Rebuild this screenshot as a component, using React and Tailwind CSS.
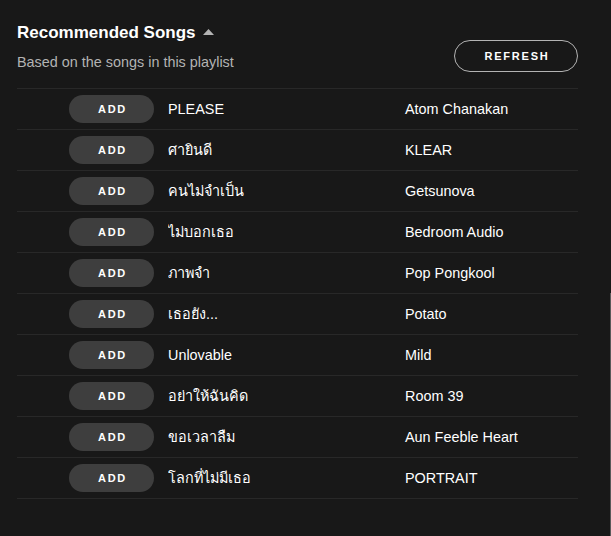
const songs = [
  { title: 'PLEASE', artist: 'Atom Chanakan' },
  { title: 'ศายินดี', artist: 'KLEAR' },
  { title: 'คนไม่จำเป็น', artist: 'Getsunova' },
  { title: 'ไม่บอกเธอ', artist: 'Bedroom Audio' },
  { title: 'ภาพจำ', artist: 'Pop Pongkool' },
  { title: 'เธอยัง...', artist: 'Potato' },
  { title: 'Unlovable', artist: 'Mild' },
  { title: 'อย่าให้ฉันคิด', artist: 'Room 39' },
  { title: 'ขอเวลาลืม', artist: 'Aun Feeble Heart' },
  { title: 'โลกที่ไม่มีเธอ', artist: 'PORTRAIT' },
];

export default function App() {
  return (
    <div className="relative w-[611px] h-[536px] overflow-hidden bg-[#181818] text-white font-['Liberation_Sans','Noto_Sans',sans-serif]">
      <div className="pl-[17px] w-[578px]">
        {/* Header */}
        <div className="flex justify-between items-start h-[88px] pt-[21px]">
          <div>
            <div className="flex items-center gap-[7px]">
              <h2 className="text-[17px] leading-[24px] font-bold">Recommended Songs</h2>
              <svg width="11" height="6" viewBox="0 0 11 6" className="mt-[-2px]">
                <path d="M0 6 L5.5 0 L11 6 Z" fill="#b3b3b3" />
              </svg>
            </div>
            <p className="mt-[8px] text-[14.4px] leading-[18px] text-[#b3b3b3]">Based on the songs in this playlist</p>
          </div>
          <button className="mt-[19px] w-[124px] h-[32px] rounded-full border border-[#b3b3b3] text-[11px] font-bold tracking-[0.16em] pl-[2px]">
            REFRESH
          </button>
        </div>

        {/* Song list */}
        <div className="border-t border-[#282828]">
          {songs.map((s) => (
            <div key={s.title} className="flex items-center h-[41px] border-b border-[#282828] pl-[52px]">
              <button className="w-[85px] h-[28px] rounded-full bg-[#3e3e3e] text-[11px] font-bold tracking-[0.16em] pl-[2px]">
                ADD
              </button>
              <div className="ml-[14px] w-[237px] text-[14.4px] leading-[20px] truncate">{s.title}</div>
              <div className="text-[14.4px] leading-[20px]">{s.artist}</div>
            </div>
          ))}
        </div>
      </div>
      <div className="absolute right-0 top-[293px] bottom-0 w-[1px] bg-[#5a5a5a]" />
    </div>
  );
}
